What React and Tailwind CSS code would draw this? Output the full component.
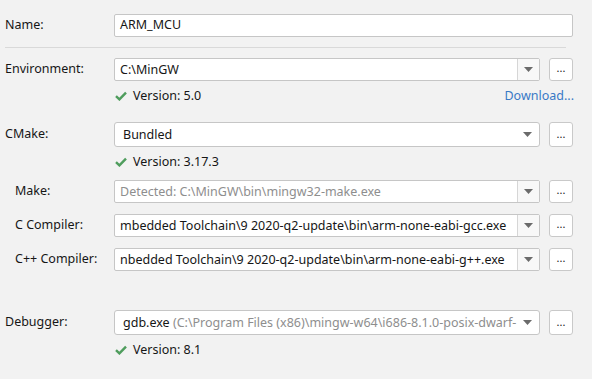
import React from 'react';

const Check = () => (
  <svg width="12" height="10" viewBox="0 0 12 10" className="shrink-0">
    <path d="M1 5.2 L4.4 8.4 L11 1.6" fill="none" stroke="#4f9d5d" strokeWidth="2.4" />
  </svg>
);

const Arrow = () => (
  <svg width="9" height="5" viewBox="0 0 9 5" className="shrink-0">
    <path d="M0 0 H9 L4.5 5 Z" fill="#6b6b6b" />
  </svg>
);

const Dots = () => (
  <button className="w-[24px] shrink-0 self-stretch rounded-[3px] border border-[#c9c9c9] bg-white text-[11px] leading-none flex items-end justify-center pb-[7px] text-[#222]">
    ...
  </button>
);

const Version = ({ text }) => (
  <div className="flex items-center h-[16px] mt-[7px] pl-[110px] gap-[6px]">
    <Check />
    <span>{text}</span>
  </div>
);

// editable combo: text field + separate drop-down part
const EditCombo = ({ label, children, indent, muted }) => (
  <div className="flex items-center h-[23px]">
    <div className={`w-[109px] shrink-0 ${indent ? 'pl-[10px]' : ''}`}>{label}</div>
    <div className="flex flex-1 min-w-0 h-full gap-[9px]">
      <div className="flex flex-1 min-w-0 rounded-[2px] border border-[#c6c6c6] bg-white">
        <div className={`flex-1 min-w-0 overflow-hidden whitespace-nowrap pl-[5px] leading-[21px] ${muted ? 'text-[#8e8e8e]' : ''}`}>
          {children}
        </div>
        <div className="w-[22px] shrink-0 border-l border-[#d6d6d6] bg-[#f8f8f8] flex items-center justify-center">
          <Arrow />
        </div>
      </div>
      <Dots />
    </div>
  </div>
);

// non-editable combo
const Combo = ({ label, children }) => (
  <div className="flex items-center h-[25px]">
    <div className="w-[109px] shrink-0">{label}</div>
    <div className="flex flex-1 min-w-0 h-full gap-[9px]">
      <div className="flex flex-1 min-w-0 items-center rounded-[3px] border border-[#c6c6c6] bg-white pr-[7px]">
        <div className="flex-1 min-w-0 overflow-hidden whitespace-nowrap pl-[8px] pr-[18px] leading-[23px]">{children}</div>
        <Arrow />
      </div>
      <Dots />
    </div>
  </div>
);

export default function App() {
  return (
    <div className="w-[592px] h-[379px] overflow-hidden bg-[#f2f2f2] pt-[14px] pl-[5px] pr-[19px] text-[12.5px] leading-none text-[#161616] font-['Microsoft_YaHei','Noto_Sans',sans-serif]">
      <div className="flex items-center h-[23px]">
        <div className="w-[109px] shrink-0">Name:</div>
        <div className="flex-1 h-full rounded-[2px] border border-[#c6c6c6] bg-white pl-[5px] flex items-center">ARM_MCU</div>
      </div>

      <div className="h-px bg-[#d9d9d9] mt-[10px] mr-[7px]" />

      <div className="mt-[10px]">
        <EditCombo label="Environment:">C:\MinGW</EditCombo>
      </div>
      <div className="flex items-center justify-between">
        <Version text="Version: 5.0" />
        <a className="mt-[7px] mr-[-1px] text-[#3979c6]">Download...</a>
      </div>

      <div className="mt-[18px]">
        <Combo label="CMake:">Bundled</Combo>
      </div>
      <Version text="Version: 3.17.3" />

      <div className="mt-[10px] flex flex-col gap-[11px]">
        <EditCombo label="Make:" indent muted>Detected: C:\MinGW\bin\mingw32-make.exe</EditCombo>
        <EditCombo label="C Compiler:" indent>mbedded Toolchain\9 2020-q2-update\bin\arm-none-eabi-gcc.exe</EditCombo>
        <EditCombo label="C++ Compiler:" indent>nbedded Toolchain\9 2020-q2-update\bin\arm-none-eabi-g++.exe</EditCombo>
      </div>

      <div className="mt-[39px]">
        <Combo label="Debugger:">
          gdb.exe <span className="text-[#8e8e8e]">(C:\Program Files (x86)\mingw-w64\i686-8.1.0-posix-dwarf-</span>
        </Combo>
      </div>
      <Version text="Version: 8.1" />
    </div>
  );
}
